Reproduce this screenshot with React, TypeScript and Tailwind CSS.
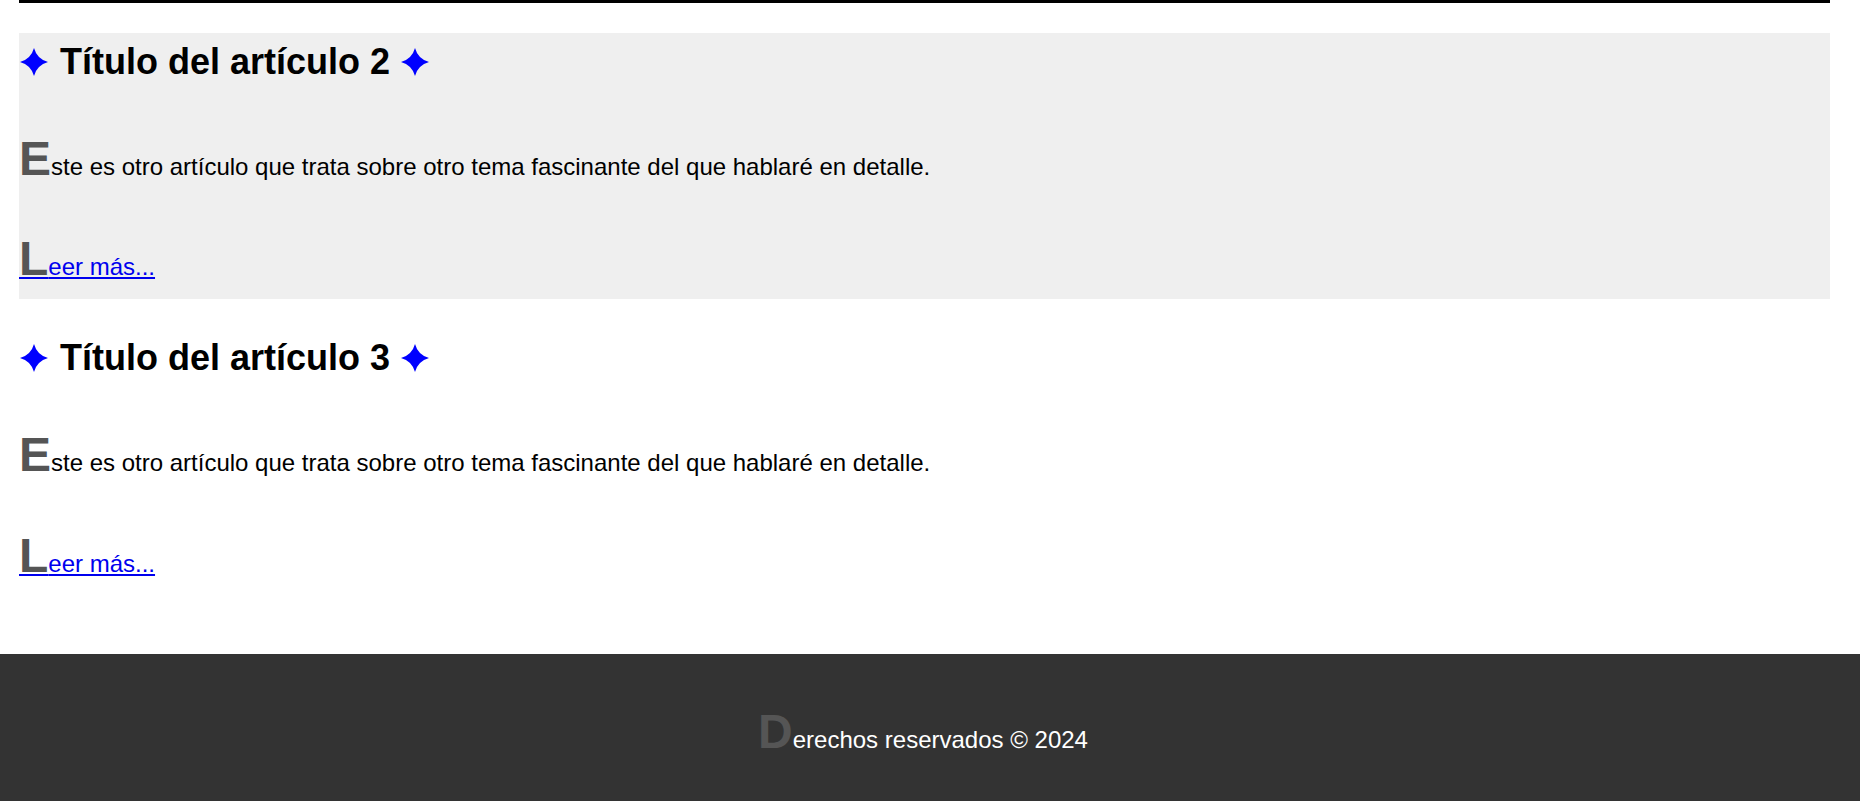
const articles = [
  { id: 2, shaded: true },
  { id: 3, shaded: false },
]

const body =
  "ste es otro artículo que trata sobre otro tema fascinante del que hablaré en detalle."

// four-point sparkle used around article titles
const Sparkle = ({ className }: { className: string }) => (
  <svg
    viewBox="0 0 28 28"
    className={`inline-block h-[28px] w-[28px] align-[-2px] ${className}`}
    fill="#0000ff"
  >
    <path d="M14 0 Q17 11 28 14 Q17 17 14 28 Q11 17 0 14 Q11 11 14 0Z" />
  </svg>
)

const App = () => {
  return (
    <div className="w-[1860px] bg-white text-black leading-[1.6] font-['Liberation_Sans','DejaVu_Sans',Arial,sans-serif]">
      <main className="ml-[19px] w-[1811px]">
        {/* Header rule */}
        <div className="h-[3px] bg-black" />

        {articles.map((a) => (
          <article
            key={a.id}
            className={`mt-[30px] pb-[1px] ${a.shaded ? "bg-[#efefef]" : ""}`}
          >
            {/* Title */}
            <h2 className="m-0 text-[36px] font-bold">
              <Sparkle className="ml-[1px] mr-[2px]" /> Título del artículo {a.id}{" "}
              <Sparkle className="ml-[1px]" />
            </h2>

            {/* Content */}
            <p className="mt-[30px] text-[24px]">
              <span className="text-[48px] font-bold text-[#555555]">E</span>
              {body}
            </p>
            <p className="mt-[24px] text-[24px]">
              <a href="#" className="text-[#0000ee] underline">
                <span className="text-[48px] font-bold text-[#555555]">L</span>
                eer más...
              </a>
            </p>
          </article>
        ))}
      </main>

      {/* Footer */}
      <footer className="mt-[59px] bg-[#333333] pt-[40px] pb-[42px] pr-[14px] text-center text-[24px] text-white">
        <p>
          <span className="text-[48px] font-bold text-[#555555]">D</span>
          erechos reservados © 2024
        </p>
      </footer>
    </div>
  )
}

export default App
